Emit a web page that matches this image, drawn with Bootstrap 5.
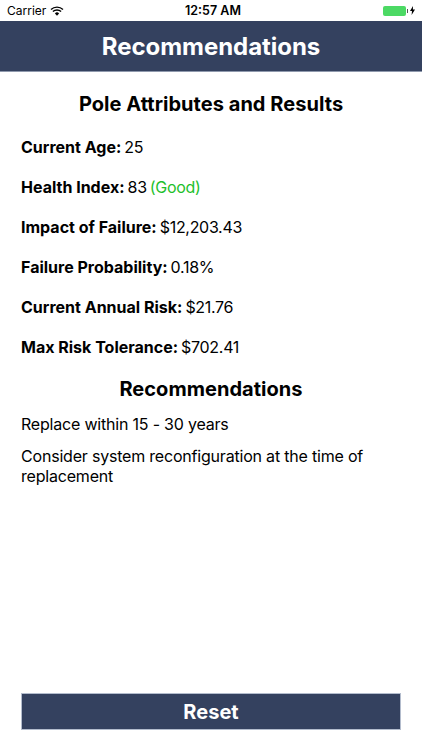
<!DOCTYPE html>
<html lang="en">
<head>
<meta charset="utf-8">
<title>Recommendations</title>
<link href="https://cdn.jsdelivr.net/npm/bootstrap@5.3.0/dist/css/bootstrap.min.css" rel="stylesheet">
<style>
html,body{height:750px;overflow:hidden}
body{font-family:Inter,"Liberation Sans",sans-serif;color:#000;background:#fff}
.screen{height:750px}
.status{height:21px;font-size:12px;line-height:21px;padding:0 7px}
.status-side{width:150px}
.status-time{font-weight:600;font-size:12.5px;margin-left:4px}
.head{height:51px;background:#34415f;color:#fff;border-bottom:1px solid #8f99ad;padding-top:2px}
.head-title{font-size:24px;font-weight:700;letter-spacing:-.05px;margin:0}
.sec-title{font-size:20px;font-weight:700;letter-spacing:.04px;margin:0;line-height:28px}
.pole-title{margin-top:18px;margin-bottom:19px}
.attrs{padding:0 21px}
.attr-list{margin-bottom:-2px}
.attr{font-size:16px;line-height:20px;height:40px;letter-spacing:-.3px;margin:0}
.attr b{font-weight:700;margin-right:3px;letter-spacing:0}
.good{color:#1fbf2c;margin-left:3px}
.rec-list{margin-top:11px;gap:12px}
.rec{font-size:16px;line-height:20px;letter-spacing:-.2px;margin:0}
.reset{height:37px;background:#34415f;color:#fff;font-size:20px;font-weight:700;line-height:35px;padding:1px 0 0;border:1px solid #b3bccd;border-radius:0;letter-spacing:.05px;margin:0 21px 20px;width:380px}
.reset:hover{background:#34415f;color:#fff}
.batt{width:23px;height:10px;background:#4cd964;border-radius:2px}
.batt-tip{width:1.5px;height:4px;background:#555;margin:0 2px 0 1px}
</style>
</head>
<body>
<div class="screen d-flex flex-column">
  <div class="status d-flex align-items-center justify-content-between">
    <div class="status-side d-flex align-items-center gap-1">
      <span>Carrier</span>
      <svg width="14" height="10" viewBox="0 0 14 10" aria-hidden="true"><path d="M7 9.8 4.9 7.4a3 3 0 0 1 4.2 0Z" fill="#000"/><path d="M1 3.6a8.6 8.6 0 0 1 12 0M2.9 5.6a5.9 5.9 0 0 1 8.2 0" fill="none" stroke="#000" stroke-width="1.4"/></svg>
    </div>
    <div class="status-time">12:57 AM</div>
    <div class="status-side d-flex align-items-center justify-content-end">
      <span class="batt"></span><span class="batt-tip"></span>
      <svg width="5" height="9" viewBox="0 0 5 9" aria-hidden="true"><path d="M3 0 0 5h2L1.6 9 5 3.6H2.9Z" fill="#000"/></svg>
    </div>
  </div>
  <div class="head d-flex align-items-center justify-content-center"><h1 class="head-title">Recommendations</h1></div>
  <h2 class="sec-title text-center pole-title">Pole Attributes and Results</h2>
  <div class="attrs attr-list">
    <p class="attr"><b>Current Age:</b>25</p>
    <p class="attr"><b>Health Index:</b>83<span class="good">(Good)</span></p>
    <p class="attr"><b>Impact of Failure:</b>$12,203.43</p>
    <p class="attr"><b>Failure Probability:</b>0.18%</p>
    <p class="attr"><b>Current Annual Risk:</b>$21.76</p>
    <p class="attr"><b>Max Risk Tolerance:</b>$702.41</p>
  </div>
  <h2 class="sec-title text-center">Recommendations</h2>
  <div class="attrs rec-list d-flex flex-column">
    <p class="rec">Replace within 15 - 30 years</p>
    <p class="rec">Consider system reconfiguration at the time of replacement</p>
  </div>
  <button type="button" class="btn reset mt-auto">Reset</button>
</div>
<script src="https://cdn.jsdelivr.net/npm/bootstrap@5.3.0/dist/js/bootstrap.bundle.min.js"></script>
</body>
</html>
